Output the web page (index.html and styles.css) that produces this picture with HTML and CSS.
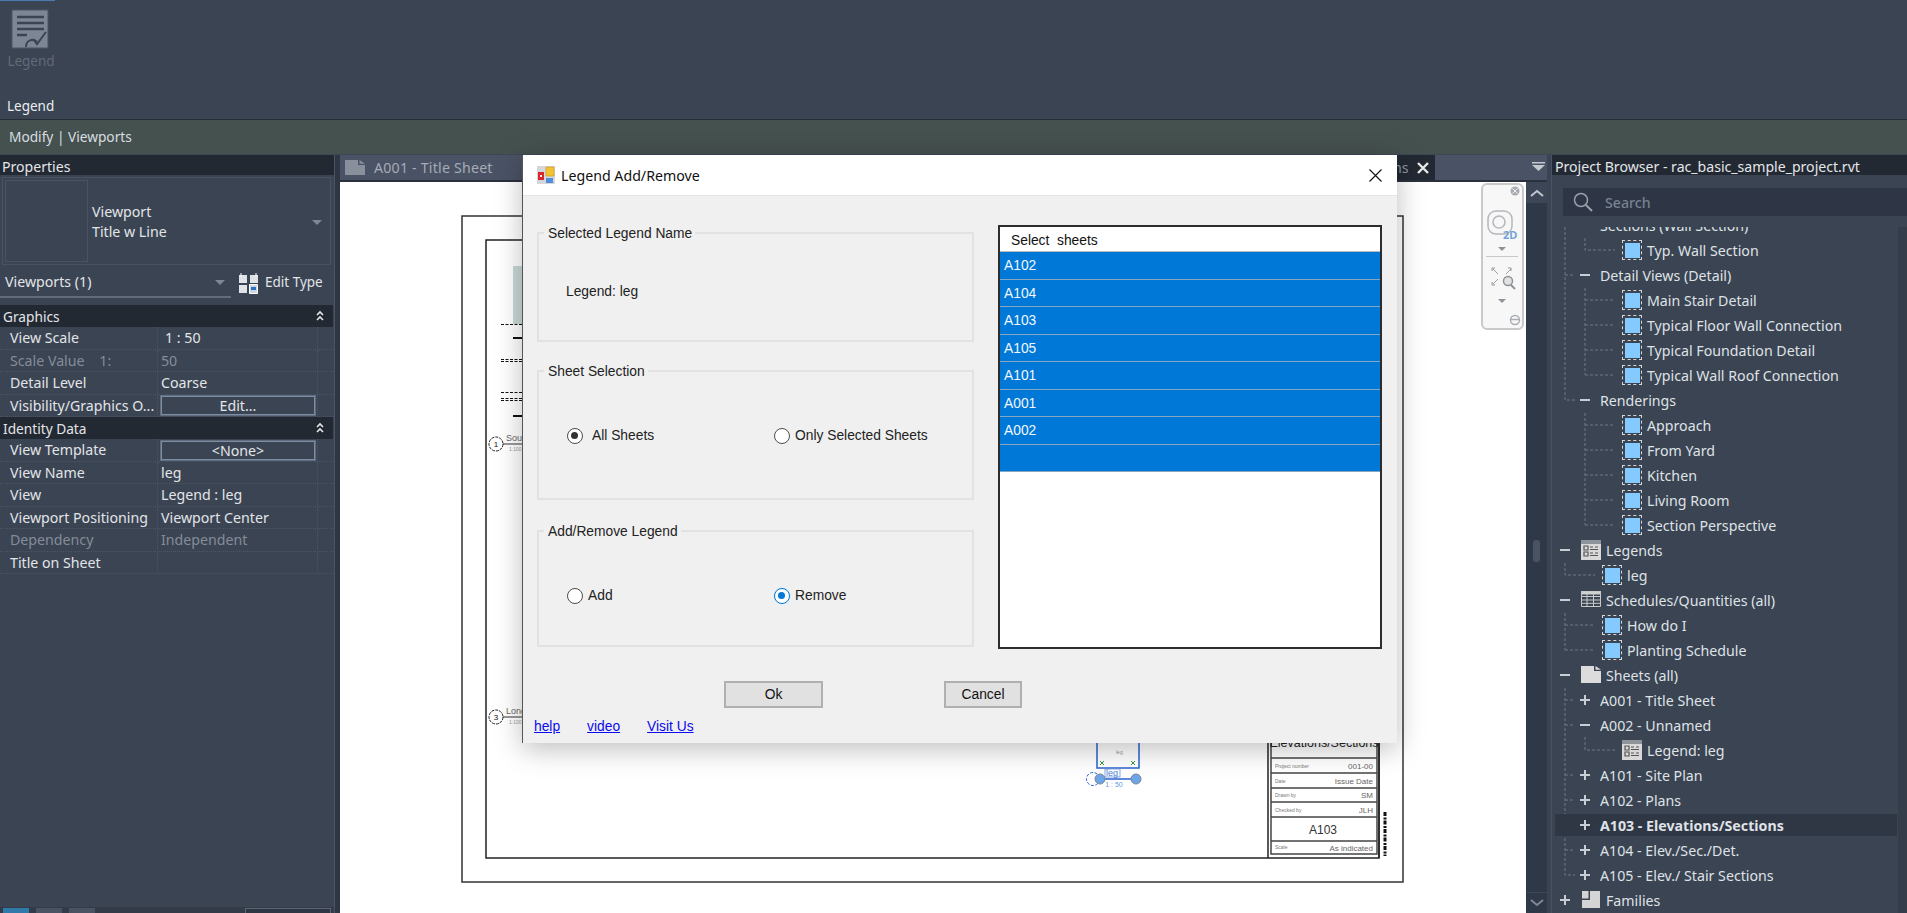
FILE: index.html
```html
<!DOCTYPE html>
<html lang="en">
<head>
<meta charset="utf-8">
<title>Legend Add/Remove</title>
<link rel="stylesheet" href="styles.css">
</head>
<body>
<svg class="defs" width="0" height="0" aria-hidden="true">
  <symbol id="i-legend" viewBox="0 0 20 20">
    <path d="M0 0h20v20H0z" fill="#d9d9d9"/>
    <path d="M0 0h20v4H0z" fill="#8f949b"/>
    <path d="M3 6h4v4H3zM3 12h4v4H3z" fill="none" stroke="#555" stroke-width="1.2"/>
    <path d="M9 7h3M14 7h3M9 9.500h8M9 13h3M14 13h3M9 15.500h8" stroke="#555" stroke-width="1.2"/>
  </symbol>
  <symbol id="i-table" viewBox="0 0 20 20">
    <path d="M0 1h20v3.500H0z" fill="#d0d0d0"/>
    <path d="M.5 1.500h19v15H.5zM.5 6.500h19M.5 10h19M.5 13.300h19M6 4v12M12.500 4v12" fill="none" stroke="#c9c9c9"/>
  </symbol>
  <symbol id="i-sheet" viewBox="0 0 20 20">
    <path d="M0 1h13v5h7v12H0zM14.500 1l5.500 3.800h-5.500z" fill="#dcdcdc"/>
  </symbol>
  <symbol id="i-family" viewBox="0 0 20 20">
    <path d="M1 10h8V1h10v17H1z" fill="#d4d4d4"/>
    <path d="M1 1h6.500v7.500H1z" fill="#d4d4d4"/>
  </symbol>
  <symbol id="i-chev" viewBox="0 0 10 12">
    <path d="M2 5l3-3 3 3M2 10l3-3 3 3" fill="none" stroke="#e6e6e6" stroke-width="1.600"/>
  </symbol>
</svg>

<div class="app">
  <header class="ribbon">
    <div class="rb-tool">
      <svg class="rb-icon" width="38" height="40" viewBox="0 0 38 40">
        <path d="M1 1h36v38H1z" fill="#7d8694" stroke="#4b5463"/>
        <path d="M6 8h27M6 14h27M6 20h27M6 26h10" stroke="#3b4453" stroke-width="2.500"/>
        <path d="M15 38c0-7 7-9 11-5M22 30l4 5 9-12" fill="none" stroke="#3b4453" stroke-width="2"/>
      </svg>
      <span class="rb-label">Legend</span>
    </div>
    <div class="rb-panel">Legend</div>
  </header>
  <div class="context">Modify | Viewports</div>

  <div class="main">
    <aside class="props">
      <div class="pane-title">Properties</div>
      <div class="type-box">
        <div class="thumb"></div>
        <div class="type-name">Viewport<br>Title w Line</div>
        <span class="caret type-caret"></span>
      </div>
      <div class="filter">
        <div class="filter-sel">Viewports (1)<span class="caret filter-caret"></span></div>
        <svg class="edit-icon" width="21" height="21" viewBox="0 0 21 21">
          <path d="M1 2h8v8H1zM12 2h8v8h-8zM1 12h8v8H1z" fill="#dfe2e6"/>
          <path d="M11.500 11.500h8v9h-8z" fill="#cfd6df" stroke="#fff"/>
          <path d="M13 14h5v3h-5z" fill="#2c6fc7"/>
          <path d="M3 0v4M18 0v4" stroke="#fff"/>
        </svg>
        <span class="edit-text">Edit Type</span>
      </div>
      <div class="sec-head">Graphics<svg class="chev"><use href="#i-chev"/></svg></div>
      <div class="row"><span class="k">View Scale</span><span class="v v-in">1 : 50</span></div>
      <div class="row off"><span class="k">Scale Value&nbsp;&nbsp;&nbsp;&nbsp;1:</span><span class="v">50</span></div>
      <div class="row"><span class="k">Detail Level</span><span class="v">Coarse</span></div>
      <div class="row"><span class="k">Visibility/Graphics O...</span><span class="v"><span class="pbtn">Edit...</span></span></div>
      <div class="sec-head">Identity Data<svg class="chev"><use href="#i-chev"/></svg></div>
      <div class="row"><span class="k">View Template</span><span class="v"><span class="pbtn">&lt;None&gt;</span></span></div>
      <div class="row"><span class="k">View Name</span><span class="v">leg</span></div>
      <div class="row"><span class="k">View</span><span class="v">Legend : leg</span></div>
      <div class="row"><span class="k">Viewport Positioning</span><span class="v">Viewport Center</span></div>
      <div class="row off"><span class="k">Dependency</span><span class="v">Independent</span></div>
      <div class="row"><span class="k">Title on Sheet</span><span class="v"></span></div>
      <div class="status">
        <span class="st st-on"></span><span class="st"></span><span class="st"></span><span class="st st-box"></span>
      </div>
    </aside>
    <div class="split"></div>

    <section class="view">
      <div class="tabs">
        <svg class="tab-icon" width="20" height="15" viewBox="0 0 20 15"><path d="M0 0h13v5h7v10H0zM14.500 0l5.500 3.800h-5.500z" fill="#8a909b"/></svg>
        <span class="tab-text">A001 - Title Sheet</span>
        <div class="tab-active"><span class="tab-clip">ns</span><svg width="12" height="12" viewBox="0 0 12 12"><path d="M1 1l10 10M11 1L1 11" stroke="#e8e8e8" stroke-width="2.400"/></svg></div>
        <svg class="tab-menu" width="13" height="10" viewBox="0 0 13 10"><path d="M0 0h13v1.500H0zM0 3h13L6.500 9z" fill="#c4c9d0"/></svg>
      </div>
      <div class="canvas">
        <svg class="sheet" width="1186" height="731" viewBox="340 182 1186 731">
          <rect x="462" y="216" width="941" height="666" fill="none" stroke="#333" stroke-width="1.500"/>
          <rect x="486" y="240" width="893" height="618" fill="none" stroke="#222" stroke-width="1.500"/>
          <rect x="513" y="266" width="12" height="58" fill="#c8d8d6"/>
          <path d="M501 324.500h24M501 359.500h24M501 361.500h24M501 392.500h24M501 398.500h24M501 400.500h24" stroke="#111" stroke-dasharray="3 1.500"/>
          <path d="M513 338h12M513 416h12" stroke="#111" stroke-width="2"/>
          <circle cx="496" cy="444" r="7" fill="#fff" stroke="#222" stroke-dasharray="3 1"/>
          <path d="M503 444h24" stroke="#333"/>
          <text x="496" y="447" class="s-num">1</text>
          <text x="506" y="441" class="s-title">South</text>
          <text x="509" y="451" class="s-tiny">1:100</text>
          <circle cx="496" cy="717" r="7" fill="#fff" stroke="#222" stroke-dasharray="3 1"/>
          <path d="M503 717h24" stroke="#333"/>
          <text x="496" y="720" class="s-num">3</text>
          <text x="506" y="714" class="s-title">Long</text>
          <text x="509" y="724" class="s-tiny">1:100</text>

          <rect x="1097" y="730" width="42" height="38" fill="none" stroke="#2a62d0" stroke-width="1.500"/>
          <path d="M1100 761l4 4m0-4l-4 4M1131 761l4 4m0-4l-4 4" stroke="#2c9a45"/>
          <text x="1116" y="754" class="s-tiny">leg</text>
          <rect x="1105" y="769" width="15" height="8" fill="none" stroke="#6a97e0" stroke-width=".8"/>
          <text x="1112" y="776" class="s-leg">leg</text>
          <circle cx="1093" cy="779" r="6.500" fill="none" stroke="#2a62d0" stroke-dasharray="3 1.500"/>
          <path d="M1100 779h36" stroke="#2a62d0" stroke-width="1.500"/>
          <circle cx="1100" cy="779" r="5" fill="#6ea4e8" stroke="#7d8896"/>
          <circle cx="1136" cy="779" r="5" fill="#6ea4e8" stroke="#7d8896"/>
          <text x="1114" y="787" class="s-blue">1 : 50</text>

          <path d="M1268 700v158M1379 700v158" stroke="#222" stroke-width="1.500"/>
          <rect x="1271" y="700" width="106" height="154" fill="none" stroke="#444" stroke-width="1.500"/>
          <path d="M1271 758h106M1271 773h106M1271 788h106M1271 802h106M1271 817h106M1271 841h106" stroke="#444" stroke-width="1.500"/>
          <text x="1324" y="747" class="s-head">Elevations/Sections</text>
          <text x="1275" y="768" class="s-tiny2">Project number</text><text x="1373" y="769" class="s-val">001-00</text>
          <text x="1275" y="783" class="s-tiny2">Date</text><text x="1373" y="784" class="s-val">Issue Date</text>
          <text x="1275" y="797" class="s-tiny2">Drawn by</text><text x="1373" y="798" class="s-val">SM</text>
          <text x="1275" y="812" class="s-tiny2">Checked by</text><text x="1373" y="813" class="s-val">JLH</text>
          <text x="1323" y="834" class="s-no">A103</text>
          <text x="1275" y="849" class="s-tiny2">Scale</text><text x="1373" y="851" class="s-val">As indicated</text>
          <path d="M1385 812v44" stroke="#111" stroke-width="3" stroke-dasharray="4 1.500 2 1"/>
        </svg>

        <div class="navbar">
          <svg width="43" height="147" viewBox="0 0 43 147">
            <circle cx="34" cy="8" r="4.500" fill="#a9adb2"/>
            <path d="M31.500 5.500l5 5m0-5l-5 5" stroke="#eee" stroke-width="1"/>
            <rect x="7" y="28" width="24" height="23" rx="8" fill="none" stroke="#b4b7bb" stroke-width="1.500"/>
            <circle cx="18" cy="39" r="6" fill="none" stroke="#b4b7bb" stroke-width="1.500"/>
            <text x="22" y="56" class="nb-2d">2D</text>
            <path d="M17 64h8l-4 4z" fill="#8f9399"/>
            <path d="M5 73.500h32" stroke="#c8c8c8"/>
            <path d="M12 86l5 5M30 86l-5 5M12 101l5-5" stroke="#9ea2a7"/>
            <path d="M11 88v-3h3M27 85h3v3M11 99v3h3" fill="none" stroke="#8f9399"/>
            <circle cx="27" cy="98" r="4.500" fill="#e2e2e2" stroke="#8f9399" stroke-width="1.500"/>
            <path d="M30 102l4 4" stroke="#8f9399" stroke-width="2"/>
            <path d="M17 116h8l-4 4z" fill="#8f9399"/>
            <circle cx="34" cy="137" r="4.500" fill="none" stroke="#a9adb2" stroke-width="1.500"/>
            <path d="M30 136.500h8" stroke="#a9adb2" stroke-width="1.500"/>
          </svg>
        </div>
      </div>
    </section>

    <div class="rail">
      <div class="rail-top"></div>
      <div class="rail-up"><svg width="14" height="8" viewBox="0 0 14 8"><path d="M1 7l6-5 6 5" fill="none" stroke="#c2c7ce" stroke-width="2"/></svg></div>
      <div class="rail-thumb"></div>
      <div class="rail-down"><svg width="14" height="8" viewBox="0 0 14 8"><path d="M1 1l6 5 6-5" fill="none" stroke="#7f8896" stroke-width="2"/></svg></div>
    </div>

    <aside class="browser">
      <div class="pane-title pane-title-b">Project Browser - rac_basic_sample_project.rvt</div>
      <div class="search">
        <svg width="22" height="22" viewBox="0 0 22 22"><circle cx="9" cy="9" r="6.500" fill="none" stroke="#9aa1ab" stroke-width="1.500"/><path d="M14 14l6 6" stroke="#9aa1ab" stroke-width="2"/></svg>
        <span class="search-text">Search</span>
      </div>
      <div class="tree">
        <svg class="guides" width="355" height="686" viewBox="1552 227 355 686">
          <path d="M1565 227v173h10M1565 275h10M1585 238v12h30M1585 288v87M1585 300h30M1585 325h30M1585 350h30M1585 375h30M1585 413v112M1585 425h30M1585 450h30M1585 475h30M1585 500h30M1585 525h30M1565 563v12h30M1565 613v37M1565 625h30M1565 650h30M1565 688v187h10M1565 700h10M1565 725h10M1565 775h10M1565 800h10M1565 825h10M1565 850h10M1585 737v13h30" fill="none" stroke="#6f7885" stroke-dasharray="3 2"/>
        </svg>
        <div class="t-row t-clip"><span class="t-l1"></span><span class="tog"></span>Sections (Wall Section)</div>
        <div class="t-row"><span class="t-l2"></span><span class="view-ico"></span>Typ. Wall Section</div>
        <div class="t-row"><span class="t-l1"></span><span class="tog minus"></span>Detail Views (Detail)</div>
        <div class="t-row"><span class="t-l2"></span><span class="view-ico"></span>Main Stair Detail</div>
        <div class="t-row"><span class="t-l2"></span><span class="view-ico"></span>Typical Floor Wall Connection</div>
        <div class="t-row"><span class="t-l2"></span><span class="view-ico"></span>Typical Foundation Detail</div>
        <div class="t-row"><span class="t-l2"></span><span class="view-ico"></span>Typical Wall Roof Connection</div>
        <div class="t-row"><span class="t-l1"></span><span class="tog minus"></span>Renderings</div>
        <div class="t-row"><span class="t-l2"></span><span class="view-ico"></span>Approach</div>
        <div class="t-row"><span class="t-l2"></span><span class="view-ico"></span>From Yard</div>
        <div class="t-row"><span class="t-l2"></span><span class="view-ico"></span>Kitchen</div>
        <div class="t-row"><span class="t-l2"></span><span class="view-ico"></span>Living Room</div>
        <div class="t-row"><span class="t-l2"></span><span class="view-ico"></span>Section Perspective</div>
        <div class="t-row"><span class="t-l0"></span><span class="tog tog0 minus"></span><svg class="node-ico"><use href="#i-legend"/></svg>Legends</div>
        <div class="t-row"><span class="t-lv"></span><span class="view-ico"></span>leg</div>
        <div class="t-row"><span class="t-l0"></span><span class="tog tog0 minus"></span><svg class="node-ico"><use href="#i-table"/></svg>Schedules/Quantities (all)</div>
        <div class="t-row"><span class="t-lv"></span><span class="view-ico"></span>How do I</div>
        <div class="t-row"><span class="t-lv"></span><span class="view-ico"></span>Planting Schedule</div>
        <div class="t-row"><span class="t-l0"></span><span class="tog tog0 minus"></span><svg class="node-ico"><use href="#i-sheet"/></svg>Sheets (all)</div>
        <div class="t-row"><span class="t-l1"></span><span class="tog plus"></span>A001 - Title Sheet</div>
        <div class="t-row"><span class="t-l1"></span><span class="tog minus"></span>A002 - Unnamed</div>
        <div class="t-row"><span class="t-l2"></span><svg class="node-ico"><use href="#i-legend"/></svg>Legend: leg</div>
        <div class="t-row"><span class="t-l1"></span><span class="tog plus"></span>A101 - Site Plan</div>
        <div class="t-row"><span class="t-l1"></span><span class="tog plus"></span>A102 - Plans</div>
        <div class="t-row t-cur"><span class="t-l1"></span><span class="tog plus"></span>A103 - Elevations/Sections</div>
        <div class="t-row"><span class="t-l1"></span><span class="tog plus"></span>A104 - Elev./Sec./Det.</div>
        <div class="t-row"><span class="t-l1"></span><span class="tog plus"></span>A105 - Elev./ Stair Sections</div>
        <div class="t-row"><span class="t-l0"></span><span class="tog tog0 plus"></span><svg class="node-ico"><use href="#i-family"/></svg>Families</div>
        <div class="tree-bar"></div>
      </div>
    </aside>
  </div>

  <div class="dialog">
    <div class="dlg-title">
      <svg class="dlg-icon" width="18" height="18" viewBox="0 0 18 18">
        <path d="M0 0h18v18H0z" fill="#d4d6db"/>
        <path d="M9 1h8v9H9z" fill="#f4c430" stroke="#c9952a" stroke-width=".6"/>
        <path d="M1 6h6v8H1z" fill="#d8262c"/>
        <path d="M3 9h2v2H3z" fill="#fff"/>
        <path d="M9 12h7v5H9z" fill="#4f8fdc"/>
      </svg>
      <span class="dlg-name">Legend Add/Remove</span>
      <svg class="dlg-close" width="13" height="13" viewBox="0 0 13 13"><path d="M.5.500l12 12M12.500.500l-12 12" stroke="#111" stroke-width="1.100"/></svg>
    </div>
    <div class="dlg-body">
      <div class="dlg-cols">
        <div class="dlg-left">
          <fieldset class="grp g1">
            <legend>Selected Legend Name</legend>
            <div class="grp-text">Legend: leg</div>
          </fieldset>
          <fieldset class="grp g2">
            <legend>Sheet Selection</legend>
            <div class="radios">
              <div class="radio"><span class="dot dot-dark"></span><span class="lbl-wide">All Sheets</span></div>
              <div class="radio"><span class="dot"></span>Only Selected Sheets</div>
            </div>
          </fieldset>
          <fieldset class="grp g3">
            <legend>Add/Remove Legend</legend>
            <div class="radios">
              <div class="radio"><span class="dot"></span>Add</div>
              <div class="radio"><span class="dot dot-blue"></span>Remove</div>
            </div>
          </fieldset>
        </div>
        <div class="list">
          <div class="list-head">Select&nbsp; sheets</div>
          <div class="list-row">A102</div>
          <div class="list-row">A104</div>
          <div class="list-row">A103</div>
          <div class="list-row">A105</div>
          <div class="list-row">A101</div>
          <div class="list-row">A001</div>
          <div class="list-row">A002</div>
          <div class="list-row"></div>
        </div>
      </div>
      <div class="dlg-btns">
        <button class="btn btn-ok">Ok</button>
        <button class="btn btn-cancel">Cancel</button>
      </div>
      <div class="dlg-links">
        <a href="#">help</a><a href="#">video</a><a href="#">Visit Us</a>
      </div>
    </div>
  </div>
</div>
</body>
</html>
```

FILE: styles.css
```css
* { box-sizing: border-box; }
html, body { margin: 0; padding: 0; height: 100%; overflow: hidden; background: #3b4453; }
.defs { position: absolute; }
.app {
  position: relative;
  width: 1907px;
  height: 913px;
  display: flex;
  flex-direction: column;
  overflow: hidden;
  font-family: "Noto Sans", "Open Sans", sans-serif;
  font-size: 14.2px;
  color: #e2e5e8;
  background: #3b4453;
}

/* Ribbon */
.ribbon {
  height: 120px;
  flex: none;
  padding: 9px 0 0 7px;
  background: linear-gradient(#4a7ab0, #4a7ab0) 0 0 / 55px 1px no-repeat, #3b4453;
  border-bottom: 1px solid #272d36;
  display: flex;
  flex-direction: column;
  font-size: 13.5px;
}
.rb-tool { width: 48px; display: flex; flex-direction: column; align-items: center; }
.rb-icon { display: block; margin-left: -3px; }
.rb-label { color: #616a78; line-height: 18px; margin-top: 3px; }
.rb-panel { margin-top: 26px; line-height: 20px; color: #eceef0; }
.context {
  height: 34px;
  flex: none;
  padding: 0 0 0 9px;
  line-height: 34px;
  background: #45514f;
  color: #d8dde0;
  font-size: 13.7px;
}

/* Main columns */
.main { flex: 1; display: flex; min-height: 0; border-top: 1px solid #3d4757; }

/* Properties */
.props { width: 334px; flex: none; display: flex; flex-direction: column; position: relative; }
.pane-title { height: 20px; line-height: 23px; padding-left: 2px; background: #222933; color: #e4e6e9; flex: none; font-size: 14.1px; }
.type-box {
  height: 88px;
  margin: 2px 3px 0 2px;
  flex: none;
  border: 1px solid #4a5364;
  padding: 2px;
  display: flex;
  align-items: center;
  position: relative;
}
.thumb { width: 83px; height: 82px; border: 1px solid #4a5364; flex: none; }
.type-name { margin-left: 4px; padding-top: 1px; line-height: 20px; }
.caret { width: 0; height: 0; border-left: 5px solid transparent; border-right: 5px solid transparent; border-top: 5px solid #7e8794; }
.type-caret { position: absolute; right: 8px; top: 42px; }
.filter { height: 40px; flex: none; display: flex; align-items: flex-start; }
.filter-sel {
  width: 231px;
  height: 33px;
  line-height: 34px;
  padding-left: 5px;
  border-bottom: 2px solid #606b7c;
  position: relative;
}
.filter-caret { position: absolute; right: 6px; top: 15px; }
.edit-icon { margin: 8px 0 0 7px; }
.edit-text { margin-left: 6px; line-height: 34px; font-size: 13.5px; }
.sec-head {
  height: 22px;
  flex: none;
  line-height: 22px;
  padding: 2px 8px 0 3px;
  margin-right: 1px;
  background: #222933;
  display: flex;
  justify-content: space-between;
  align-items: center;
  font-size: 13.7px;
}
.chev { width: 10px; height: 12px; margin-top: -3px; }
.row {
  height: 22.5px;
  flex: none;
  display: grid;
  grid-template-columns: 158px 160px 1fr;
  line-height: 22.5px;
  border-bottom: 1px dotted #4b5566;
}
.row .k { padding-left: 10px; border-right: 1px dotted #4b5566; white-space: nowrap; }
.row .v { padding-left: 3px; border-right: 1px dotted #4b5566; position: relative; }
.row .v-in { padding-left: 7px; }
.row.off { color: #848c99; }
.pbtn {
  display: block;
  width: 154px;
  height: 19px;
  margin: 1.5px 0 0 0;
  line-height: 17px;
  text-align: center;
  border: 1px solid #7f8da3;
  outline: .5px solid #5f6c80;
  background: #3b4453;
}
.status {
  position: absolute;
  left: 0;
  right: 0;
  bottom: 0;
  height: 6px;
  display: flex;
  gap: 7px;
  padding-left: 3px;
  background: #333b49;
}
.st { width: 26px; height: 5px; margin-top: 1px; background: #4a5364; }
.st-on { background: #2f7aa8; }
.st-box { width: 86px; margin-left: 143px; background: #2f3643; border: 1px solid #5b6473; border-bottom: 0; }

.split { width: 6px; flex: none; background: #2e3643; border-left: 1px solid #4b5464; }

/* Central view */
.view { width: 1186px; flex: none; display: flex; flex-direction: column; }
.tabs {
  height: 27px;
  flex: none;
  display: flex;
  align-items: center;
  background: #4a5265;
  border-bottom: 2px solid #2a313c;
  position: relative;
  z-index: 1;
  padding-left: 5px;
}
.tab-text { margin-left: 9px; color: #a6abb4; letter-spacing: .2px; }
.tab-active {
  position: absolute;
  left: 1050px;
  top: 0;
  width: 45px;
  height: 25px;
  background: #222933;
  display: flex;
  align-items: center;
  gap: 8px;
  padding-left: 3px;
  color: #8e949e;
}
.tab-menu { position: absolute; right: -19px; top: 7px; }
.canvas { flex: 1; background: #fff; position: relative; overflow: hidden; }
.sheet { position: absolute; left: 0; top: 0; }
.s-num { font: 8px "Liberation Sans", sans-serif; text-anchor: middle; fill: #111; }
.s-title { font: 9px "Liberation Sans", sans-serif; fill: #666; }
.s-tiny { font: 5px "Liberation Sans", sans-serif; fill: #999; }
.s-blue { font: 7px "Liberation Sans", sans-serif; fill: #6a97e0; text-anchor: middle; }
.s-leg { font: 9px "Liberation Sans", sans-serif; fill: #4f82d8; text-anchor: middle; }
.s-head { font: 12.5px "Liberation Sans", sans-serif; fill: #222; text-anchor: middle; }
.s-tiny2 { font: 5px "Liberation Sans", sans-serif; fill: #777; }
.s-val { font: 8px "Liberation Sans", sans-serif; fill: #666; text-anchor: end; }
.s-no { font: 12px "Liberation Sans", sans-serif; fill: #333; text-anchor: middle; }
.navbar {
  position: absolute;
  left: 1141px;
  top: 1px;
  width: 43px;
  height: 147px;
  background: #f7f7f7;
  border: 2px solid #c9c9c9;
  border-radius: 6px;
}
.navbar svg { position: absolute; left: -2px; top: -2px; }
.nb-2d { font: bold 11px "Noto Sans", sans-serif; fill: #76a3d6; }

/* Rail */
.rail { width: 25px; flex: none; background: #2f3846; border-right: 4px solid #3b4453; position: relative; display: flex; flex-direction: column; }
.rail-top { height: 27px; flex: none; background: #4a5265; border-bottom: 2px solid #2a313c; }
.rail-up { height: 21px; flex: none; background: #3d4656; display: flex; align-items: center; justify-content: center; }
.rail-thumb { position: absolute; left: 7px; top: 385px; width: 7px; height: 22px; background: #4a5364; border-radius: 3px; }
.rail-down { margin-top: auto; height: 21px; display: flex; align-items: center; justify-content: center; border-top: 1px solid #3d4656; }

/* Project browser */
.browser { width: 356px; flex: none; display: flex; flex-direction: column; min-height: 0; border-left: 1px solid #4a5364; }
.pane-title-b { padding-left: 3px; }
.search {
  height: 28px;
  flex: none;
  margin: 13px 0 0 11px;
  background: #2e3645;
  display: flex;
  align-items: center;
  padding-left: 9px;
}
.search-text { margin-left: 11px; color: #768292; font-weight: 500; }
.tree { position: relative; flex: 1; margin-top: 11px; overflow: hidden; min-height: 0; }
.guides { position: absolute; left: 0; top: 0; }
.t-row {
  height: 25px;
  line-height: 25px;
  display: flex;
  align-items: center;
  white-space: nowrap;
  color: #dfe2e6;
  position: relative;
}
.t-clip { margin-top: -14.5px; }
.t-l0 { width: 8px; flex: none; }
.t-l1 { width: 28px; flex: none; }
.t-lv { width: 50px; flex: none; }
.t-l2 { width: 70px; flex: none; }
.tog { width: 20px; height: 10px; flex: none; position: relative; }
.tog0 { width: 21px; }
.minus::before, .plus::before {
  content: "";
  position: absolute;
  left: 0;
  top: 4px;
  width: 10px;
  height: 2px;
  background: #c9ced4;
}
.plus::after {
  content: "";
  position: absolute;
  left: 4px;
  top: 0;
  width: 2px;
  height: 10px;
  background: #c9ced4;
}
.t-cur {
  background: linear-gradient(#2f3644, #2f3644) 3px 1px / calc(100% - 13px) 22px no-repeat;
  font-weight: bold;
}
.view-ico {
  width: 20px;
  height: 20px;
  flex: none;
  margin-right: 5px;
  padding: 1.5px;
  border: 1px dashed #d8d8d8;
  background: #85caff content-box;
}
.node-ico { width: 20px; height: 20px; flex: none; margin-right: 5px; }
.tree-bar { position: absolute; right: 0; top: 0; width: 9px; height: 100%; background: #353d4b; }

/* Dialog */
.dialog {
  position: absolute;
  z-index: 5;
  left: 522px;
  top: 155px;
  width: 875px;
  height: 588px;
  background: #f0f0f0;
  color: #222;
  font-family: "Liberation Sans", Arial, sans-serif;
  font-size: 13.8px;
  box-shadow: 0 6px 26px rgba(0, 0, 0, .26);
  border-left: 1px solid #555;
}
.dlg-title {
  height: 41px;
  background: #fff;
  border-bottom: 1px solid #e4e4e4;
  display: flex;
  align-items: center;
  padding-left: 14px;
}
.dlg-icon { flex: none; }
.dlg-name { margin-left: 6px; font-family: "Noto Sans", sans-serif; font-size: 14.2px; color: #111; }
.dlg-close { margin-left: auto; margin-right: 15px; }
.dlg-body { padding: 29px 0 0 11px; }
.dlg-cols { display: flex; margin-left: 3px; }
.dlg-left { width: 437px; flex: none; }
.grp { margin: 0; padding: 0; min-width: 0; border: 2px solid #e2e2e2; display: block; }
.grp legend { margin-left: 5px; padding: 0 3px 0 4px; line-height: 16px; position: relative; top: 1px; }
.g1 { height: 117px; }
.g2 { height: 137px; margin-top: 21px; }
.g3 { height: 124px; margin-top: 23px; }
.grp-text { padding: 43px 0 0 27px; line-height: 16px; }
.radios { display: grid; grid-template-columns: 207px 1fr; padding: 49px 0 0 28px; }
.radio { display: flex; align-items: center; gap: 5px; line-height: 16px; }
.dot {
  width: 16px;
  height: 16px;
  flex: none;
  border-radius: 50%;
  background: #fff;
  border: 1.5px solid #4d4d4d;
  position: relative;
}
.lbl-wide { margin-left: 4px; }
.dot-dark::after, .dot-blue::after {
  content: "";
  position: absolute;
  left: 3px;
  top: 3px;
  width: 7px;
  height: 7px;
  border-radius: 50%;
  background: #333;
}
.dot-blue { border-color: #0078d7; box-shadow: 0 0 0 .5px #cfe6fa; }
.dot-blue::after { background: #0078d7; }
.list {
  width: 384px;
  height: 424px;
  margin-left: 24px;
  flex: none;
  background: #fff;
  border: 2px solid #2d2d2d;
}
.list-head {
  height: 25px;
  padding-left: 11px;
  line-height: 27px;
  color: #111;
  background: #fff;
  border-bottom: 1px solid #bbb;
}
.list-row {
  height: 27.5px;
  line-height: 27px;
  padding-left: 4px;
  color: #f2f7fc;
  background: #0078d7;
  border-bottom: 1px solid #86a5c0;
}
.dlg-btns { display: flex; margin: 32px 0 0 190px; }
.btn {
  height: 27px;
  padding: 0;
  font: inherit;
  color: #111;
  background: #e1e1e1;
  border: 2px solid #b0b0b0;
}
.btn-ok { width: 99px; }
.btn-cancel { width: 78px; margin-left: 121px; }
.dlg-links { display: flex; gap: 27px; margin-top: 11px; line-height: 16px; }
.dlg-links a { color: #0a0aee; text-decoration: underline; }
```
